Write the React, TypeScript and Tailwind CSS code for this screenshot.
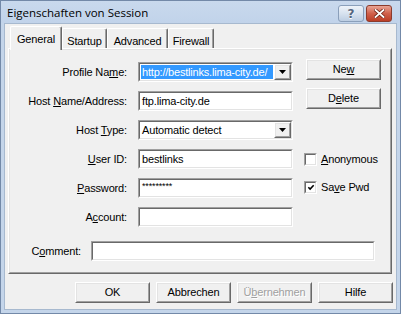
import * as React from "react";
import { clsx } from "clsx";

const cn = (...a: Parameters<typeof clsx>) => clsx(...a);

// Access key underline
function U({ children }: { children: React.ReactNode }) {
  return <span className="underline underline-offset-[1px]">{children}</span>;
}

function Sunken({
  className,
  children,
}: {
  className?: string;
  children?: React.ReactNode;
}) {
  return (
    <div
      className={cn(
        "border border-t-[#a0a0a0] border-l-[#a0a0a0] border-b-white border-r-white",
        className,
      )}
    >
      <div className="flex h-full items-center border border-t-[#696969] border-l-[#696969] border-b-[#e3e3e3] border-r-[#e3e3e3] bg-white">
        {children}
      </div>
    </div>
  );
}

function Raised({
  className,
  children,
}: {
  className?: string;
  children?: React.ReactNode;
}) {
  return (
    <div
      className={cn(
        "border border-t-white border-l-white border-b-[#696969] border-r-[#696969]",
        className,
      )}
    >
      <div className="flex h-full items-center justify-center border border-t-[#e3e3e3] border-l-[#e3e3e3] border-b-[#a0a0a0] border-r-[#a0a0a0] bg-[#f0f0f0]">
        {children}
      </div>
    </div>
  );
}

function DropArrow() {
  return (
    <Raised className="h-full w-[17px] shrink-0">
      <svg width="7" height="4" viewBox="0 0 7 4">
        <path d="M0 0h7L3.5 4z" fill="#000" />
      </svg>
    </Raised>
  );
}

function Checkbox({ checked }: { checked?: boolean }) {
  return (
    <Sunken className="h-[13px] w-[13px] shrink-0">
      {checked && (
        <svg width="9" height="9" viewBox="0 0 9 9" className="ml-[1px]">
          <path d="M1.5 4.2l2 2 4-4.2" stroke="#000" strokeWidth="1.8" fill="none" />
        </svg>
      )}
    </Sunken>
  );
}

function Row({
  label,
  children,
  extra,
}: {
  label: React.ReactNode;
  children: React.ReactNode;
  extra?: React.ReactNode;
}) {
  return (
    <div className="flex h-[29px] items-start">
      <div className="mt-[3px] flex h-[20px] w-[117px] items-center justify-end">
        <span className="whitespace-pre">{label}</span>
      </div>
      <div className="ml-[11px] mt-[3px] h-[20px] w-[155px]">{children}</div>
      {extra}
    </div>
  );
}

function DlgButton({
  children,
  disabled,
}: {
  children: React.ReactNode;
  disabled?: boolean;
}) {
  return (
    <Raised className="h-[21px] w-[75px]">
      <span
        className={cn(
          disabled && "text-[#a0a0a0] [text-shadow:1px_1px_0_#fff]",
        )}
      >
        {children}
      </span>
    </Raised>
  );
}

const tabs = [
  { name: "Startup", w: "w-[45px]" },
  { name: "Advanced", w: "w-[61px]" },
  { name: "Firewall", w: "w-[46px]" },
];

export default function App() {
  return (
    <div className="flex h-[314px] w-[401px] flex-col border border-[#7389a8] bg-[#c4d5ea] font-['Liberation_Sans',Arial,sans-serif] text-[11px] tracking-[-0.15px] text-black">
      {/* title bar */}
      <div className="flex h-[22px] shrink-0 items-start bg-gradient-to-b from-[#c9d9ed] to-[#c1d3ea]">
        <div className="pl-[6px] pt-[3px] font-['Open_Sans',sans-serif] text-[11.5px] tracking-normal text-black">
          Eigenschaften von Session
        </div>
        <div className="ml-auto flex gap-[2px] pr-[8px] pt-[4px]">
          <div className="flex h-[17px] w-[26px] items-center justify-center rounded-[3px] border border-[#8a9fba] bg-gradient-to-b from-[#eef3f9] via-[#d7e2ef] to-[#bccde2]">
            <span className="font-['DejaVu_Sans',sans-serif] text-[12px] font-bold leading-none text-[#55667f] [text-shadow:0_1px_0_#fff]">
              ?
            </span>
          </div>
          <div className="flex h-[17px] w-[26px] items-center justify-center rounded-[3px] border border-[#8b3b2c] bg-gradient-to-b from-[#e8a495] via-[#d0604b] to-[#bb3d25]">
            <svg width="11" height="9" viewBox="0 0 11 9">
              <path d="M1.5 1l8 7M9.5 1l-8 7" stroke="#6e2216" strokeWidth="3.4" strokeLinecap="square" />
              <path d="M1.5 1l8 7M9.5 1l-8 7" stroke="#fff" strokeWidth="1.8" strokeLinecap="square" />
            </svg>
          </div>
        </div>
      </div>

      {/* frame + client */}
      <div className="flex flex-1 flex-col px-[3px] pb-[3px]">
        <div className="flex flex-1 flex-col border border-[#a7b9cf] bg-[#f0f0f0]">
          {/* tabs */}
          <div className="relative z-10 flex h-[26px] items-end pl-[5px]">
            <div className="flex h-[24px] w-[52px] items-start justify-center rounded-t-[2px] border-l border-t border-white bg-[#f0f0f0] pt-[4px] shadow-[inset_-1px_0_0_#a0a0a0] [border-right:1px_solid_#696969]">
              General
            </div>
            {tabs.map((t) => (
              <div
                key={t.name}
                className={cn(
                  "mb-[2px] flex h-[20px] items-start justify-center rounded-t-[2px] border-l border-t border-white pt-[4px] shadow-[inset_-1px_0_0_#a0a0a0] [border-right:1px_solid_#696969]",
                  t.w,
                )}
              >
                {t.name}
              </div>
            ))}
          </div>

          {/* panel */}
          <div className="-mt-[2px] ml-[3px] h-[226px] w-[384px] border border-t-white border-l-white border-b-[#696969] border-r-[#696969]">
            <div className="h-full border border-t-[#e3e3e3] border-l-[#e3e3e3] border-b-[#a0a0a0] border-r-[#a0a0a0] pt-[9px]">
              <Row
                label={
                  <>
                    Profile Na<U>m</U>e:
                  </>
                }
                extra={
                  <Raised className="ml-[13px] h-[21px] w-[75px]">
                    <span>
                      Ne<U>w</U>
                    </span>
                  </Raised>
                }
              >
                <Sunken className="h-full">
                  <div className="flex h-full min-w-0 flex-1 items-center px-[1px]">
                    <div className="flex h-[14px] min-w-0 flex-1 items-center overflow-hidden whitespace-nowrap bg-[#3399ff] pl-[1px] tracking-[-0.2px] text-white">
                      http://bestlinks.lima-city.de/
                    </div>
                  </div>
                  <DropArrow />
                </Sunken>
              </Row>
              <Row
                label={
                  <>
                    Host <U>N</U>ame/Address:
                  </>
                }
                extra={
                  <Raised className="ml-[13px] h-[21px] w-[75px]">
                    <span>
                      D<U>e</U>lete
                    </span>
                  </Raised>
                }
              >
                <Sunken className="h-full">
                  <span className="pl-[2px]">ftp.lima-city.de</span>
                </Sunken>
              </Row>
              <Row
                label={
                  <>
                    Host <U>T</U>ype:
                  </>
                }
              >
                <Sunken className="h-full">
                  <span className="flex-1 pl-[2px]">Automatic detect</span>
                  <DropArrow />
                </Sunken>
              </Row>
              <Row
                label={
                  <>
                    <U>U</U>ser ID:
                  </>
                }
                extra={
                  <div className="ml-[11px] mt-[5px] flex items-center gap-[4px]">
                    <Checkbox />
                    <span>
                      <U>A</U>nonymous
                    </span>
                  </div>
                }
              >
                <Sunken className="h-full">
                  <span className="pl-[2px]">bestlinks</span>
                </Sunken>
              </Row>
              <Row
                label={
                  <>
                    <U>P</U>assword:
                  </>
                }
                extra={
                  <div className="ml-[11px] mt-[4px] flex items-center gap-[4px]">
                    <Checkbox checked />
                    <span>
                      Sa<U>v</U>e Pwd
                    </span>
                  </div>
                }
              >
                <Sunken className="h-full">
                  <span className="-mt-[3px] pl-[2px] text-[9px]">*********</span>
                </Sunken>
              </Row>
              <Row
                label={
                  <>
                    A<U>c</U>count:
                  </>
                }
              >
                <Sunken className="h-full" />
              </Row>

              <div className="mt-[8px] flex items-center">
                <div className="w-[71px] text-right">
                  C<U>o</U>mment:
                </div>
                <Sunken className="ml-[10px] h-[20px] w-[284px]" />
              </div>
            </div>
          </div>

          {/* buttons */}
          <div className="mt-[8px] flex justify-end gap-[6px] pr-[3px]">
            <DlgButton>OK</DlgButton>
            <DlgButton>Abbrechen</DlgButton>
            <DlgButton disabled>
              Ü<U>b</U>ernehmen
            </DlgButton>
            <DlgButton>Hilfe</DlgButton>
          </div>
        </div>
      </div>
    </div>
  );
}
